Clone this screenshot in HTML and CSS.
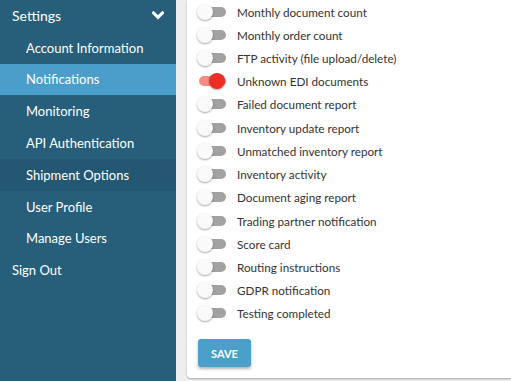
FILE: index.html
```html
<!DOCTYPE html>
<html>
<head>
<meta charset="utf-8">
<link rel="stylesheet" href="styles.css">
</head>
<body>
<div class="app">
  <nav class="sidebar">
    <div class="nav-head settings">
      <span>Settings</span>
      <svg class="chev" width="12" height="9" viewBox="0 0 12 9"><path d="M1.5 1.8 L6 6.3 L10.5 1.8" fill="none" stroke="#fff" stroke-width="3" stroke-linecap="square"/></svg>
    </div>
    <div class="nav-item">Account Information</div>
    <div class="nav-item active">Notifications</div>
    <div class="nav-item">Monitoring</div>
    <div class="nav-item">API Authentication</div>
    <div class="nav-item hover">Shipment Options</div>
    <div class="nav-item">User Profile</div>
    <div class="nav-item">Manage Users</div>
    <div class="nav-head">Sign Out</div>
  </nav>
  <main class="main">
    <section class="card">
      <div class="row"><span class="toggle"></span><span class="label">Monthly document count</span></div>
      <div class="row"><span class="toggle"></span><span class="label">Monthly order count</span></div>
      <div class="row"><span class="toggle"></span><span class="label">FTP activity (file upload/delete)</span></div>
      <div class="row"><span class="toggle on"></span><span class="label">Unknown EDI documents</span></div>
      <div class="row"><span class="toggle"></span><span class="label">Failed document report</span></div>
      <div class="row"><span class="toggle"></span><span class="label">Inventory update report</span></div>
      <div class="row"><span class="toggle"></span><span class="label">Unmatched inventory report</span></div>
      <div class="row"><span class="toggle"></span><span class="label">Inventory activity</span></div>
      <div class="row"><span class="toggle"></span><span class="label">Document aging report</span></div>
      <div class="row"><span class="toggle"></span><span class="label">Trading partner notification</span></div>
      <div class="row"><span class="toggle"></span><span class="label">Score card</span></div>
      <div class="row"><span class="toggle"></span><span class="label">Routing instructions</span></div>
      <div class="row"><span class="toggle"></span><span class="label">GDPR notification</span></div>
      <div class="row"><span class="toggle"></span><span class="label">Testing completed</span></div>
      <button class="save">SAVE</button>
    </section>
  </main>
</div>
</body>
</html>
```
FILE: styles.css
```css
* { box-sizing: border-box; }
html, body { margin: 0; padding: 0; }
body {
  font-family: Lato, "Noto Sans", sans-serif;
  background: #eeeeee;
  width: 511px;
  height: 381px;
  overflow: hidden;
}
.app {
  display: flex;
  height: 381px;
}
.sidebar {
  width: 176px;
  flex: none;
  background: #275e79;
  color: #ffffff;
  font-size: 13px;
}
.nav-head {
  height: 31.8px;
  display: flex;
  align-items: center;
  justify-content: space-between;
  padding: 0 12px 0 12px;
}
.nav-head.settings { font-size: 14px; }
.nav-item {
  height: 31.8px;
  display: flex;
  align-items: center;
  padding-left: 26px;
}
.nav-item.active { background: #4a9ec9; }
.nav-item.hover { background: #245772; }
.main {
  flex: 1;
  padding: 0 0 3px 11px;
  display: flex;
  flex-direction: column;
}
.card {
  flex: 1;
  background: #ffffff;
  border-radius: 0 0 0 4px;
  box-shadow: 0 1px 2px rgba(0,0,0,0.3);
  padding: 0 0 0 10px;
}
.row {
  height: 23.23px;
  display: flex;
  align-items: center;
}
.toggle {
  position: relative;
  width: 40px;
  height: 16px;
  flex: none;
}
.toggle::before {
  content: "";
  position: absolute;
  left: 2px;
  top: 3px;
  width: 27px;
  height: 10px;
  border-radius: 5px;
  background: #a2a2a2;
}
.toggle::after {
  content: "";
  position: absolute;
  left: 0;
  top: 0;
  width: 16px;
  height: 16px;
  border-radius: 50%;
  background: #fafafa;
  box-shadow: 0 1px 2px rgba(0,0,0,0.35);
}
.toggle.on::before { background: #f68b84; }
.toggle.on::after { left: 12px; background: #ec2f25; }
.label {
  font-size: 11.7px;
  color: #333333;
}
.save {
  margin-top: 14px;
  margin-left: 1px;
  width: 53px;
  height: 28px;
  border: none;
  border-radius: 3px;
  background: #4ba0c9;
  color: #ffffff;
  font-family: Lato, "Noto Sans", sans-serif;
  font-weight: bold;
  font-size: 11px;
  box-shadow: 0 2px 3px rgba(0,0,0,0.3);
  padding: 0;
}
```
